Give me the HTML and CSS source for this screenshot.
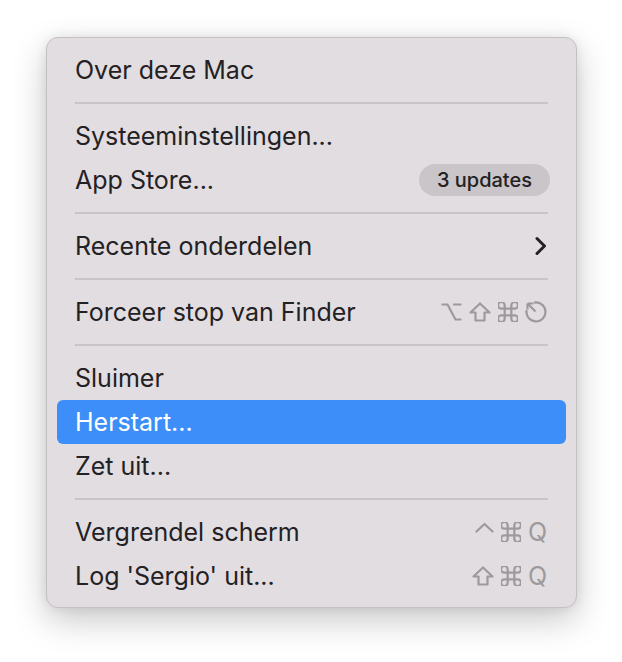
FILE: index.html
```html
<!DOCTYPE html>
<html>
<head>
    <title>Apple menu</title>
    <meta name="viewport" content="width=device-width, initial-scale=1.0">
    <link rel="stylesheet" href="styles.css">
</head>
<body>
    <div class="page">
        <div class="menu">
            <div class="item"><span class="label">Over deze Mac</span></div>
            <div class="sep"></div>
            <div class="item"><span class="label">Systeeminstellingen...</span></div>
            <div class="item">
                <span class="label">App Store...</span>
                <span class="badge">3 updates</span>
            </div>
            <div class="sep"></div>
            <div class="item">
                <span class="label">Recente onderdelen</span>
                <svg class="chevron" width="12" height="20" viewBox="0 0 12 20"><polyline points="2,2.5 9.5,10 2,17.5"/></svg>
            </div>
            <div class="sep"></div>
            <div class="item">
                <span class="label">Forceer stop van Finder</span>
                <span class="keys">
                    <svg class="key" width="21" height="20" viewBox="0 0 21 20"><path d="M0.5 2.5H6.5L14.5 17.5H20.5M12 2.5H20.5"/></svg>
                    <svg class="key" width="22" height="20" viewBox="0 0 22 20"><path d="M11 1.5L20.5 10.5H15.5V18.5H6.5V10.5H1.5Z"/></svg>
                    <svg class="key cmd" width="20" height="20" viewBox="3 3 18 18"><path d="M15 6v12a3 3 0 1 0 3-3H6a3 3 0 1 0 3 3V6a3 3 0 1 0-3 3h12a3 3 0 1 0-3-3"/></svg>
                    <svg class="key" width="22" height="22" viewBox="0 0 22 22"><path d="M9 1.7A9.5 9.5 0 1 1 1.7 9M2.5 2.5L10.5 10.5M2.5 2.5V8.5M2.5 2.5H8.5"/></svg>
                </span>
            </div>
            <div class="sep"></div>
            <div class="item"><span class="label">Sluimer</span></div>
            <div class="item active"><span class="label">Herstart...</span></div>
            <div class="item"><span class="label">Zet uit...</span></div>
            <div class="sep"></div>
            <div class="item">
                <span class="label">Vergrendel scherm</span>
                <span class="keys">
                    <svg class="key caret" width="19" height="20" viewBox="0 0 19 20"><polyline points="1.5,9.5 9.5,2 17.5,9.5"/></svg>
                    <svg class="key cmd" width="20" height="20" viewBox="3 3 18 18"><path d="M15 6v12a3 3 0 1 0 3-3H6a3 3 0 1 0 3 3V6a3 3 0 1 0-3 3h12a3 3 0 1 0-3-3"/></svg>
                    <span class="letter">Q</span>
                </span>
            </div>
            <div class="item">
                <span class="label">Log 'Sergio' uit...</span>
                <span class="keys">
                    <svg class="key" width="22" height="20" viewBox="0 0 22 20"><path d="M11 1.5L20.5 10.5H15.5V18.5H6.5V10.5H1.5Z"/></svg>
                    <svg class="key cmd" width="20" height="20" viewBox="3 3 18 18"><path d="M15 6v12a3 3 0 1 0 3-3H6a3 3 0 1 0 3 3V6a3 3 0 1 0-3 3h12a3 3 0 1 0-3-3"/></svg>
                    <span class="letter">Q</span>
                </span>
            </div>
        </div>
    </div>
</body>
</html>
```

FILE: styles.css
```css
:root {
    --menu-bg: #e2dde0;
    --menu-border: #c4c0c3;
    --text-color: #232123;
    --key-color: #9c9a9c;
    --sep-color: #c8c4c7;
    --badge-bg: #c9c5c8;
    --active-bg: #3d8ef9;
}

body, html {
    margin: 0;
    padding: 0;
    background-color: #ffffff;
}

.page {
    box-sizing: border-box;
    width: 622px;
    height: 662px;
    padding: 37px 0 0 46px;
}

.menu {
    box-sizing: border-box;
    width: 531px;
    padding: 10px 10px 9px;
    background-color: var(--menu-bg);
    border: 1px solid var(--menu-border);
    border-radius: 12px;
    box-shadow: 0 12px 34px rgba(0, 0, 0, 0.22), 0 0 12px rgba(0, 0, 0, 0.08);
    font-family: Inter, "Noto Sans", sans-serif;
    font-size: 25px;
    color: var(--text-color);
}

.item {
    height: 44px;
    display: flex;
    align-items: center;
    justify-content: space-between;
    padding: 0 19px 0 18px;
    border-radius: 6px;
}

.item.active {
    background-color: var(--active-bg);
    color: #ffffff;
}

.sep {
    height: 22px;
    display: flex;
    align-items: center;
    margin: 0 18px;
}

.sep::after {
    content: "";
    flex: 1;
    height: 2px;
    background-color: var(--sep-color);
}

.badge {
    height: 32px;
    padding: 0 18px;
    display: flex;
    align-items: center;
    background-color: var(--badge-bg);
    border-radius: 16px;
    font-size: 20px;
    font-weight: 500;
    margin-right: -3px;
}

.chevron {
    fill: none;
    stroke: #232223;
    stroke-width: 3;
    stroke-linecap: round;
    stroke-linejoin: round;
}

.keys {
    display: flex;
    align-items: center;
    gap: 7px;
}

.key {
    fill: none;
    stroke: var(--key-color);
    stroke-width: 2.2;
    stroke-linejoin: round;
}

.key.cmd {
    stroke-width: 2;
}

.key.caret {
    stroke-linecap: round;
}

.letter {
    color: var(--key-color);
    font-size: 25px;
    line-height: 1;
}
```
